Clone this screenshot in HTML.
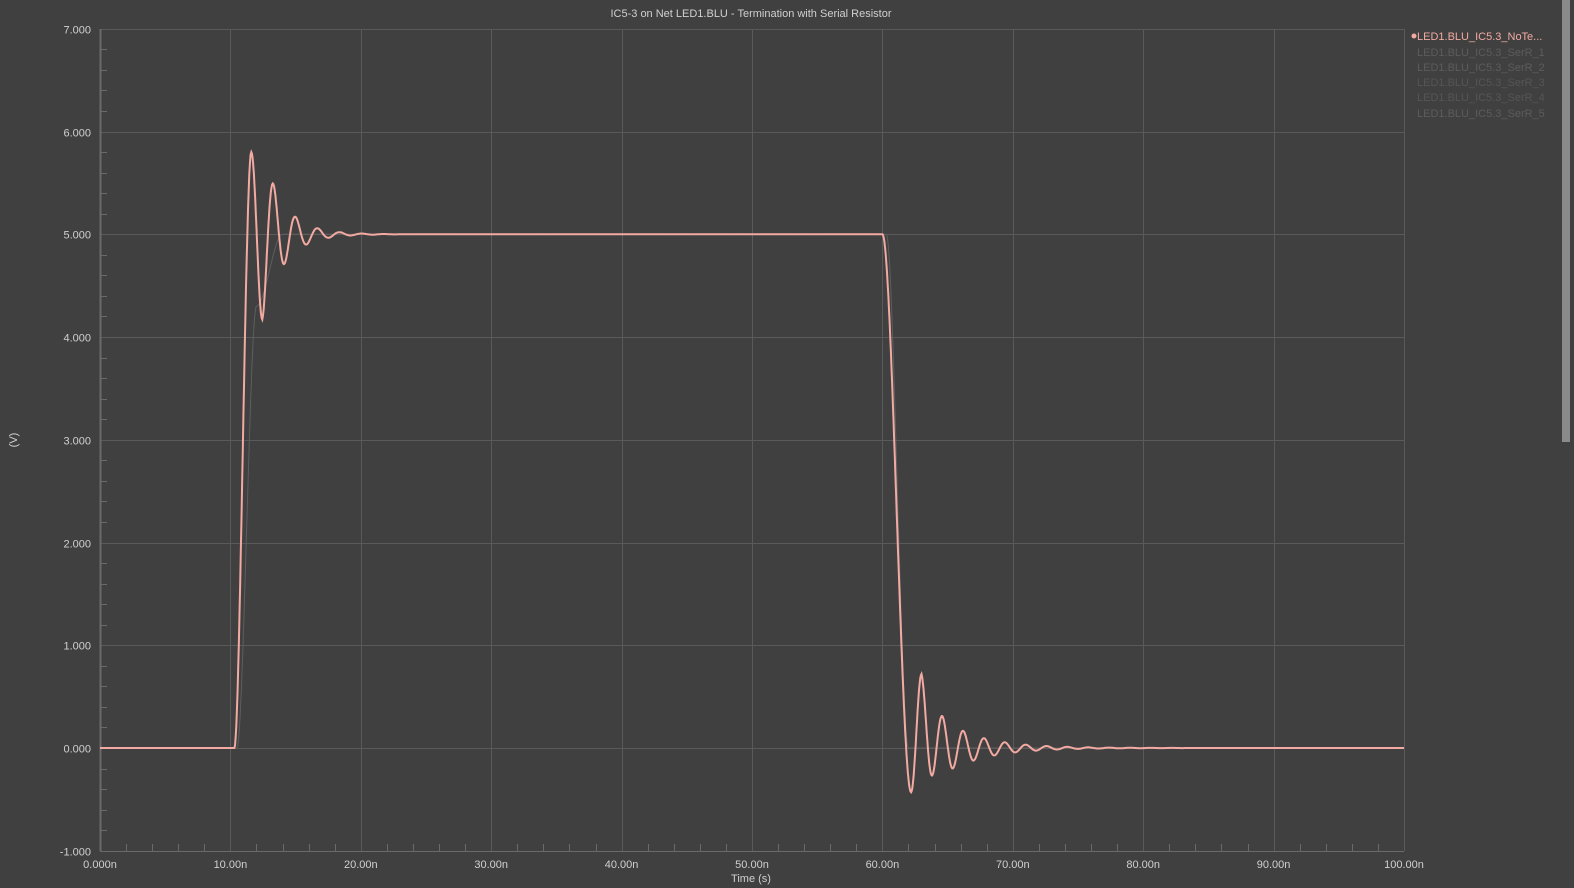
<!DOCTYPE html>
<html><head><meta charset="utf-8"><style>
body{margin:0;background:#404040;width:1574px;height:888px;overflow:hidden;font-family:"Liberation Sans",sans-serif}
svg{position:absolute;left:0;top:0}
text{font-family:"Liberation Sans",sans-serif;font-size:11px;fill:#d0d0d0}
</style></head><body>
<svg id="s" width="1574" height="888" xmlns="http://www.w3.org/2000/svg">
<rect width="1574" height="888" fill="#404040"/>
<rect x="1562" y="0" width="8" height="442" fill="#8a8a8a"/>
<g id="grid" stroke="#5a5a5a" stroke-width="1"></g>
<line x1="1404.5" y1="29" x2="1404.5" y2="851" stroke="#5a5a5a"/>
<line x1="100.5" y1="29" x2="100.5" y2="851" stroke="#6a6a6a" stroke-width="2"/>
<line x1="100" y1="851.5" x2="1404" y2="851.5" stroke="#6a6a6a" stroke-width="1"/>
<g id="ticks" stroke="#6a6a6a"></g>
<g id="lbl"></g>
<text x="751" y="17" text-anchor="middle">IC5-3 on Net LED1.BLU - Termination with Serial Resistor</text>
<text x="751" y="882" text-anchor="middle">Time (s)</text>
<text x="17" y="440" text-anchor="middle" transform="rotate(-90 17 440)">(V)</text>
<path id="w2" fill="none" stroke="#5e5e5e" stroke-width="1"/>
<path id="w" fill="none" stroke="#f2aaa2" stroke-width="2"/>
<circle cx="1414" cy="36" r="2.5" fill="#f2aaa2"/>
<text x="1417" y="40" style="fill:#f2aaa2">LED1.BLU_IC5.3_NoTe...</text>
<text x="1417" y="56" style="fill:#5c5c5c">LED1.BLU_IC5.3_SerR_1</text>
<text x="1417" y="71" style="fill:#5c5c5c">LED1.BLU_IC5.3_SerR_2</text>
<text x="1417" y="86" style="fill:#555">LED1.BLU_IC5.3_SerR_3</text>
<text x="1417" y="101" style="fill:#555">LED1.BLU_IC5.3_SerR_4</text>
<text x="1417" y="117" style="fill:#5c5c5c">LED1.BLU_IC5.3_SerR_5</text>
</svg>
<script>
var X=function(t){return 100+t*13.04},Y=function(v){return 748-v*102.75};
var g=document.getElementById('grid'),tk=document.getElementById('ticks'),lb=document.getElementById('lbl'),ns='http://www.w3.org/2000/svg';
function el(p,n,a,txt){var e=document.createElementNS(ns,n);for(var k in a)e.setAttribute(k,a[k]);if(txt)e.textContent=txt;p.appendChild(e);}
for(var i=1;i<10;i++){var x=Math.round(X(i*10))+.5;el(g,'line',{x1:x,y1:29,x2:x,y2:851});}
for(var v=-1;v<=7;v++){var y=Math.round(Y(v))+.5;if(v>-1)el(g,'line',{x1:100,y1:y,x2:1404,y2:y});
el(lb,'text',{x:91,y:y+4,'text-anchor':'end'},v.toFixed(3));}
for(var i=0;i<=50;i++){if(i%5){var x=Math.round(X(i*2))+.5;el(tk,'line',{x1:x,y1:844,x2:x,y2:851});}}
for(var i=0;i<=40;i++){if(i%5){var y=Math.round(Y(-1+i*0.2))+.5;el(tk,'line',{x1:100,y1:y,x2:107,y2:y});}}
for(var i=0;i<=10;i++)el(lb,'text',{x:X(i*10),y:868,'text-anchor':'middle'},(i*10).toFixed(i?2:3)+'n');
function ss(u){u=Math.max(0,Math.min(1,u));return u*u*(3-2*u);}
function hc(a,b,u){return a+(b-a)*(1-Math.cos(Math.PI*u))/2;}
function f(t){
 if(t<10.3)return 0;
 if(t<11.6)return 5.8*ss((t-10.3)/1.3);
 if(t<12.45)return hc(5.8,4.17,(t-11.6)/0.85);
 if(t<60)return 5-0.83*Math.exp(-(t-12.45)/1.6)*Math.cos(2*Math.PI*(t-12.45)/1.7);
 if(t<62.2)return 5-5.43*ss((t-60)/2.2);
 if(t<63)return hc(-0.43,0.72,(t-62.2)/0.8);
 var u=t-63;
 return 0.25*Math.exp(-u/0.8)+0.47*Math.exp(-u/3)*Math.cos(2*Math.PI*u/1.6);
}
function f2(t){
 if(t<10.5)return 0;
 if(t<12)return 4.3*ss((t-10.5)/1.5);
 if(t<14)return 4.3+0.7*ss((t-12)/2);
 if(t<60.3)return 5;
 if(t<62)return 5-5*ss((t-60.3)/1.7);return 0;}
var d='',d2='';
for(var t=0;t<=100.001;t+=0.05){d+=(t?'L':'M')+X(t).toFixed(1)+' '+Y(f(t)).toFixed(1);d2+=(t?'L':'M')+X(t).toFixed(1)+' '+Y(f2(t)).toFixed(1);}
document.getElementById('w').setAttribute('d',d);
document.getElementById('w2').setAttribute('d',d2);
</script>
</body></html>
